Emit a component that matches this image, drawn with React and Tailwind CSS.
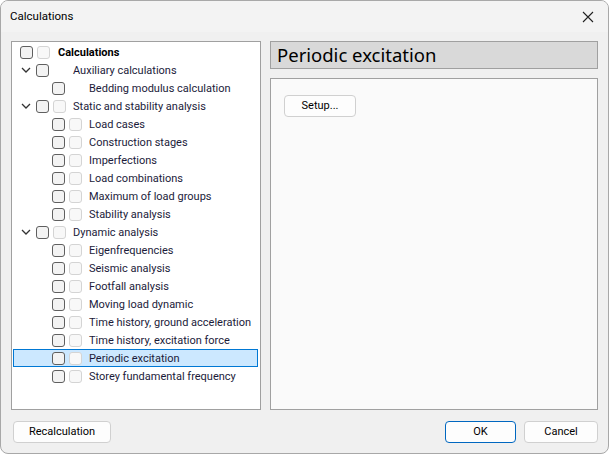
import React from 'react';

const ITEMS = [
    { label: 'Calculations', level: 0, bold: true, boxes: 2 },
    { label: 'Auxiliary calculations', level: 1, boxes: 1 },
    { label: 'Bedding modulus calculation', level: 2, boxes: 1 },
    { label: 'Static and stability analysis', level: 1, boxes: 2 },
    { label: 'Load cases', level: 2, boxes: 2 },
    { label: 'Construction stages', level: 2, boxes: 2 },
    { label: 'Imperfections', level: 2, boxes: 2 },
    { label: 'Load combinations', level: 2, boxes: 2 },
    { label: 'Maximum of load groups', level: 2, boxes: 2 },
    { label: 'Stability analysis', level: 2, boxes: 2 },
    { label: 'Dynamic analysis', level: 1, boxes: 2 },
    { label: 'Eigenfrequencies', level: 2, boxes: 2 },
    { label: 'Seismic analysis', level: 2, boxes: 2 },
    { label: 'Footfall analysis', level: 2, boxes: 2 },
    { label: 'Moving load dynamic', level: 2, boxes: 2 },
    { label: 'Time history, ground acceleration', level: 2, boxes: 2 },
    { label: 'Time history, excitation force', level: 2, boxes: 2 },
    { label: 'Periodic excitation', level: 2, boxes: 2, selected: true },
    { label: 'Storey fundamental frequency', level: 2, boxes: 2 },
];

function Box({ light }) {
    return (
        <span
            className={`block shrink-0 w-[13px] h-[13px] rounded-[3px] border ${light ? 'border-[#d4d4d4] bg-[#f8f8f8]' : 'border-[#5f5f5f] bg-[#f3f3f3]'}`}
        />
    );
}

function Chevron() {
    return (
        <svg width="10" height="6" viewBox="0 0 10 6" className="block">
            <path d="M1 1 L5 5 L9 1" fill="none" stroke="#333" strokeWidth="1.3" />
        </svg>
    );
}

function Row({ item }) {
    const indent = item.level === 2 ? 'pl-[39px]' : 'pl-[7px]';
    return (
        <div
            className={`flex items-center h-[18px] ${indent} ${item.selected ? 'bg-[#cce8ff] outline outline-1 outline-[#0078d4] -outline-offset-1' : ''}`}
        >
            {item.level === 1 && (
                <span className="w-[16px] shrink-0 flex justify-start pl-[1px]">
                    <Chevron />
                </span>
            )}
            <span className={`flex shrink-0 items-center gap-[4px] ${item.level === 0 ? 'w-[38px]' : 'w-[37px]'}`}>
                <Box />
                {item.boxes === 2 && <Box light />}
            </span>
            <span
                className={`text-[11px] leading-none whitespace-nowrap ${item.bold ? 'font-bold text-black' : 'text-[#1b1b3a]'}`}
            >
                {item.label}
            </span>
        </div>
    );
}

function WinButton({ children, className = '', primary }) {
    return (
        <button
            className={`h-[22px] rounded-[4px] border bg-[#fdfdfd] text-[11px] text-black ${primary ? 'border-[#0067c0]' : 'border-[#d0d0d0]'} ${className}`}
        >
            {children}
        </button>
    );
}

export default function App() {
    return (
        <div className="w-[609px] h-[454px] bg-white font-['Roboto',sans-serif]">
            <div className="w-full h-full flex flex-col rounded-[8px] border border-[#a8a8a8] bg-[#f0f0f0] overflow-hidden">
                <div className="h-[31px] shrink-0 flex items-center justify-between pl-[9px] pr-[14px] bg-[#f3f3f3]">
                    <span className="text-[11.5px] text-black">Calculations</span>
                    <svg width="12" height="12" viewBox="0 0 12 12">
                        <path d="M1 1 L11 11 M11 1 L1 11" stroke="#222" strokeWidth="1.1" />
                    </svg>
                </div>
                <div className="flex shrink-0 gap-[9px] px-[10px] pt-[9px] h-[378px]">
                    <div className="w-[250px] shrink-0 border border-[#a0a0a0] bg-white pt-[1px] pl-[1px] pr-[2px]">
                        {ITEMS.map((item) => (
                            <Row key={item.label} item={item} />
                        ))}
                    </div>
                    <div className="flex-1 flex flex-col gap-[9px]">
                        <div className="h-[28px] shrink-0 border border-[#a0a0a0] bg-[#d9d9d9] flex items-center pl-[6px]">
                            <span className="text-[18.5px] text-black leading-none font-['Noto_Sans',sans-serif]">Periodic excitation</span>
                        </div>
                        <div className="flex-1 border border-[#a0a0a0] bg-[#fafafa] pt-[13px] pl-[13px]">
                            <WinButton className="w-[72px] h-[21px]">Setup...</WinButton>
                        </div>
                    </div>
                </div>
                <div className="flex items-center justify-between pl-[12px] pr-[10px] pt-[11px]">
                    <WinButton className="w-[98px]">Recalculation</WinButton>
                    <div className="flex gap-[8px]">
                        <WinButton primary className="w-[71px]">OK</WinButton>
                        <WinButton className="w-[74px]">Cancel</WinButton>
                    </div>
                </div>
            </div>
        </div>
    );
}
